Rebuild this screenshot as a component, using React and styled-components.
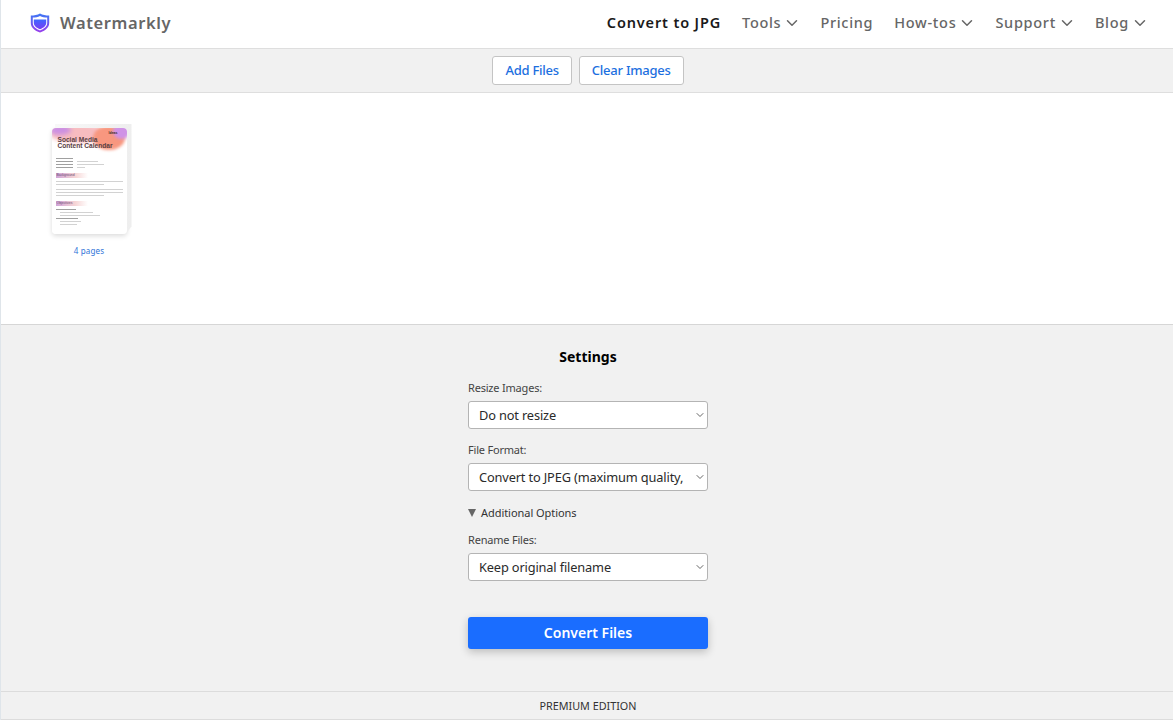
import styled, { createGlobalStyle } from "styled-components";
import { ChevronDown } from "lucide-react";

const GlobalStyle = createGlobalStyle`
  html, body {
    margin: 0;
    padding: 0;
    height: 100%;
    background: #fff;
  }
  body {
    font-family: "Noto Sans", "Open Sans", "Liberation Sans", sans-serif;
    color: #212529;
  }
  * {
    box-sizing: border-box;
  }
`;

const navItems = [
  { label: "Convert to JPG", active: true },
  { label: "Tools", menu: true },
  { label: "Pricing" },
  { label: "How-tos", menu: true },
  { label: "Support", menu: true },
  { label: "Blog", menu: true },
];

const Logo = () => (
  <svg width="20" height="20" viewBox="0 0 20 20">
    <defs>
      <linearGradient id="shieldGrad" x1="0" y1="0" x2="0" y2="1">
        <stop offset="0" stopColor="#3d78f5" />
        <stop offset="1" stopColor="#9a3cec" />
      </linearGradient>
      <linearGradient id="shieldFill" x1="0" y1="0" x2="0" y2="1">
        <stop offset="0" stopColor="#3f66ff" />
        <stop offset="1" stopColor="#7a3df5" />
      </linearGradient>
    </defs>
    <path
      d="M10 .6 C12.6 2 15.8 2.6 19.2 2.6 V10 C19.2 14.6 15.2 17.8 10 19.6 C4.8 17.8 .8 14.6 .8 10 V2.6 C4.2 2.6 7.4 2 10 .6 Z"
      fill="url(#shieldGrad)"
    />
    <path
      d="M10 3 C12 4 14.6 4.6 17.2 4.6 V10 C17.2 13.4 14 16 10 17.4 C6 16 2.8 13.4 2.8 10 V4.6 C5.4 4.6 8 4 10 3 Z"
      fill="#fff"
    />
    <path
      d="M3.8 6.6 H16.2 V10 C16.2 12.8 13.4 15 10 16.2 C6.6 15 3.8 12.8 3.8 10 Z"
      fill="url(#shieldFill)"
    />
  </svg>
);

const SettingSelect = ({ label, value }) => (
  <Field>
    <FieldLabel>{label}</FieldLabel>
    <SelectBox>
      <NativeSelect defaultValue={value}>
        <option>{value}</option>
      </NativeSelect>
      <SelectArrow>
        <ChevronDown size={12} strokeWidth={2} />
      </SelectArrow>
    </SelectBox>
  </Field>
);

const App = () => {
  return (
    <Page>
      <GlobalStyle />
      <Header>
        <Brand>
          <Logo />
          <BrandName>Watermarkly</BrandName>
        </Brand>
        <Nav>
          {navItems.map((item) => (
            <NavItem key={item.label} $active={item.active}>
              {item.label}
              {item.menu && <ChevronDown size={18} strokeWidth={2} />}
            </NavItem>
          ))}
        </Nav>
      </Header>

      <Toolbar>
        <ToolButton>Add Files</ToolButton>
        <ToolButton>Clear Images</ToolButton>
      </Toolbar>

      <FilesArea>
        <FileCard>
          <DocStack>
            <DocSheet>
              <DocHero>
                <BlobPink />
                <BlobPurple />
                <BlobOrange />
                <BlobCorner />
                <DocMark>Ideas</DocMark>
                <DocTitle>
                  Social Media
                  <br />
                  Content Calendar
                </DocTitle>
              </DocHero>
              <DocBody>
                <DocLine $w={26} $dark />
                <DocRow>
                  <DocLine $w={26} $dark />
                  <DocLine $w={32} />
                </DocRow>
                <DocRow>
                  <DocLine $w={26} $dark />
                  <DocLine $w={40} />
                </DocRow>
                <DocRow>
                  <DocLine $w={26} $dark />
                  <DocLine $w={12} />
                </DocRow>
                <DocBand>Background</DocBand>
                <DocLine $w={100} />
                <DocLine $w={72} />
                <DocLine $w={100} $gap={2} />
                <DocLine $w={100} />
                <DocLine $w={72} />
                <DocBand>Objectives</DocBand>
                <DocLine $w={30} $dark />
                <DocLine $w={50} $indent />
                <DocLine $w={60} $indent />
                <DocLine $w={34} $dark />
                <DocLine $w={32} $indent />
                <DocLine $w={26} $indent />
              </DocBody>
            </DocSheet>
          </DocStack>
          <PagesLabel>4 pages</PagesLabel>
        </FileCard>
      </FilesArea>

      <Settings>
        <SettingsTitle>Settings</SettingsTitle>
        <SettingSelect label="Resize Images:" value="Do not resize" />
        <SettingSelect label="File Format:" value="Convert to JPEG (maximum quality, 100%)" />
        <Disclosure>
          <Triangle />
          Additional Options
        </Disclosure>
        <SettingSelect label="Rename Files:" value="Keep original filename" />
        <ConvertButton>Convert Files</ConvertButton>
      </Settings>

      <Footer>PREMIUM EDITION</Footer>
    </Page>
  );
};

const Page = styled.div`
  width: 100%;
  height: 720px;
  display: flex;
  flex-direction: column;
  border-left: 1px solid #dfe5ea;
  overflow: hidden;
`;

const Header = styled.header`
  height: 49px;
  flex: none;
  display: flex;
  align-items: center;
  justify-content: space-between;
  padding: 0 26px 3px 29px;
  background: #fff;
  border-bottom: 1px solid #dedede;
`;

const Brand = styled.div`
  display: flex;
  align-items: center;
  gap: 10px;
`;

const BrandName = styled.span`
  font-size: 16.5px;
  font-weight: 600;
  letter-spacing: 0.6px;
  color: #666;
`;

const Nav = styled.nav`
  display: flex;
  align-items: center;
  gap: 21px;
  padding-bottom: 1px;
`;

const NavItem = styled.a`
  display: flex;
  align-items: center;
  gap: 2px;
  font-size: 14.5px;
  font-weight: ${(p) => (p.$active ? 600 : 500)};
  letter-spacing: ${(p) => (p.$active ? "0.85px" : "0.7px")};
  color: ${(p) => (p.$active ? "#1a1a1a" : "#666")};

  svg {
    margin: 2px -2px 0 0;
  }
`;

const Toolbar = styled.div`
  height: 44px;
  flex: none;
  display: flex;
  align-items: center;
  justify-content: center;
  gap: 7px;
  padding-left: 2px;
  background: #f1f1f1;
  border-bottom: 1px solid #dedede;
`;

const ToolButton = styled.button`
  height: 29px;
  padding: 0 12px 2px;
  background: #fff;
  border: 1px solid #c4c4c4;
  border-radius: 3px;
  font-family: inherit;
  font-size: 13px;
  font-weight: 500;
  letter-spacing: -0.25px;
  color: #1c6fe0;
`;

const FilesArea = styled.section`
  height: 232px;
  flex: none;
  padding: 35px 0 0 50px;
  background: #fff;
  border-bottom: 1px solid #d6d6d6;
`;

const FileCard = styled.div`
  width: 76px;
  display: flex;
  flex-direction: column;
  align-items: center;
`;

const DocStack = styled.div`
  position: relative;
  width: 75px;
  height: 106px;
  border-radius: 4px;
  background: #fff;
  box-shadow: 0 2px 5px rgba(0, 0, 0, 0.14);

  &::before {
    content: "";
    position: absolute;
    top: -4px;
    left: 3px;
    right: -5px;
    bottom: 0;
    background: linear-gradient(90deg, #f8f8f8, #eeeeee);
    clip-path: polygon(0 0, 100% 0, 100% 93%, 93% 100%, 0 100%);
  }
`;

const DocSheet = styled.div`
  position: relative;
  width: 100%;
  height: 100%;
  overflow: hidden;
  border-radius: 4px;
  background: #fff;
`;

const DocHero = styled.div`
  position: relative;
  height: 27px;
  overflow: hidden;
`;

const BlobPink = styled.div`
  position: absolute;
  left: -2px;
  top: -4px;
  width: 56px;
  height: 19px;
  border-radius: 50%;
  background: #f7bcc0;
  filter: blur(2px);
`;

const BlobPurple = styled.div`
  position: absolute;
  left: -3px;
  top: -3px;
  width: 22px;
  height: 10px;
  border-radius: 50%;
  background: #cb8fe2;
  filter: blur(2px);
`;

const BlobOrange = styled.div`
  position: absolute;
  right: 2px;
  top: -2px;
  width: 32px;
  height: 24px;
  border-radius: 50%;
  background: #f8977f;
  filter: blur(1.5px);
`;

const BlobCorner = styled.div`
  position: absolute;
  right: -3px;
  top: -4px;
  width: 17px;
  height: 15px;
  border-radius: 50%;
  background: #cf92e6;
  filter: blur(1.5px);
`;

const DocMark = styled.span`
  position: absolute;
  right: 9px;
  top: 3px;
  font-family: "Liberation Sans", sans-serif;
  font-size: 3.5px;
  font-weight: 700;
  color: #3a2a2a;
`;

const DocTitle = styled.div`
  position: absolute;
  left: 6px;
  top: 9px;
  font-family: "Liberation Sans", sans-serif;
  font-size: 6.6px;
  line-height: 5.8px;
  font-weight: 700;
  white-space: nowrap;
  color: #5a4042;
`;

const DocBody = styled.div`
  display: flex;
  flex-direction: column;
  gap: 2px;
  padding: 3px 4px 0;
`;

const DocRow = styled.div`
  display: flex;
  gap: 4px;

  & > div:first-child {
    flex: none;
  }
`;

const DocLine = styled.div`
  height: 1px;
  width: ${(p) => p.$w}%;
  margin-top: ${(p) => p.$gap || 0}px;
  margin-left: ${(p) => (p.$indent ? 4 : 0)}px;
  background: ${(p) => (p.$dark ? "#a0a0a0" : "#d2d2d2")};
`;

const DocBand = styled.div`
  width: 48%;
  height: 5px;
  margin: 3px 0 1px;
  padding-left: 1px;
  background: linear-gradient(90deg, #cfa3d6, #f6d5d5 60%, #fff);
  font-family: "Liberation Sans", sans-serif;
  font-size: 3.4px;
  line-height: 5px;
  color: #6a4c70;
`;

const PagesLabel = styled.div`
  margin-top: 11px;
  font-size: 8px;
  line-height: 11px;
  letter-spacing: 0.2px;
  color: #2f74d8;
`;

const Settings = styled.section`
  flex: 1;
  display: flex;
  flex-direction: column;
  align-items: center;
  padding: 22px 0 0 2px;
  background: #f1f1f1;
`;

const SettingsTitle = styled.h2`
  margin: 0 0 13px;
  font-size: 14px;
  line-height: 20px;
  font-weight: 700;
  color: #000;
`;

const Field = styled.div`
  width: 240px;
  margin-bottom: 13px;
`;

const FieldLabel = styled.div`
  font-size: 11px;
  line-height: 16px;
  letter-spacing: -0.2px;
  margin-bottom: 5px;
  color: #444;
`;

const SelectBox = styled.div`
  position: relative;
  height: 28px;
`;

const NativeSelect = styled.select`
  width: 100%;
  height: 100%;
  appearance: none;
  padding: 0 21px 0 10px;
  background: #fff;
  border: 1px solid #b4b4b4;
  border-radius: 3px;
  font-family: inherit;
  font-size: 12.8px;
  letter-spacing: -0.15px;
  color: #2a2a2a;
`;

const SelectArrow = styled.span`
  position: absolute;
  right: 2px;
  top: 8px;
  display: flex;
  color: #666;
  pointer-events: none;
`;

const Disclosure = styled.div`
  width: 240px;
  display: flex;
  align-items: center;
  gap: 5px;
  margin: 1px 0 11px;
  font-size: 11px;
  line-height: 16px;
  letter-spacing: -0.05px;
  color: #333;
`;

const Triangle = styled.span`
  width: 0;
  height: 0;
  border-left: 4.5px solid transparent;
  border-right: 4.5px solid transparent;
  border-top: 8px solid #666;
`;

const ConvertButton = styled.button`
  width: 240px;
  height: 32px;
  margin-top: 23px;
  padding: 0 0 2px;
  border: 0;
  border-radius: 3px;
  background: #1a6dff;
  box-shadow: 0 3px 8px rgba(0, 0, 0, 0.22);
  font-family: inherit;
  font-size: 14px;
  font-weight: 600;
  color: #fff;
`;

const Footer = styled.footer`
  height: 29px;
  flex: none;
  display: flex;
  align-items: center;
  justify-content: center;
  padding-left: 2px;
  background: #f1f1f1;
  border-top: 1px solid #dcdcdc;
  border-bottom: 1px solid #dcdcdc;
  font-size: 10.8px;
  color: #333;
`;

export default App;
